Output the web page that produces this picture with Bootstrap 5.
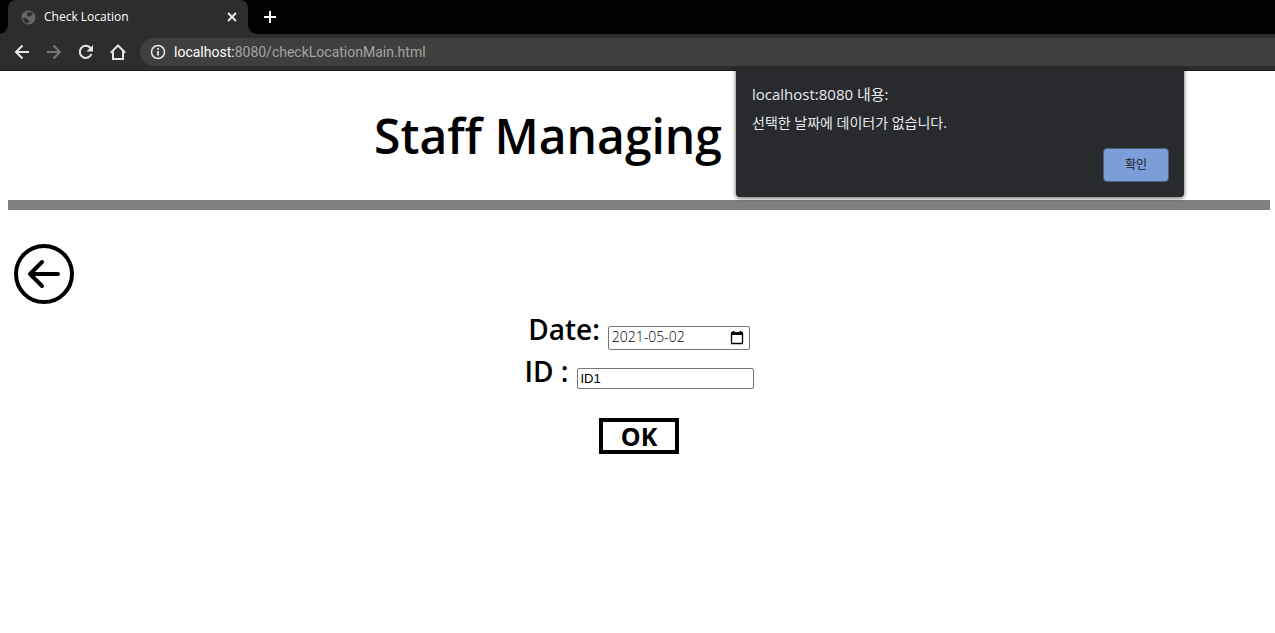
<!DOCTYPE html>
<html lang="ko">
<head>
<meta charset="utf-8">
<meta name="viewport" content="width=device-width, initial-scale=1">
<title>Check Location</title>
<link href="https://cdn.jsdelivr.net/npm/bootstrap@5.3.0/dist/css/bootstrap.min.css" rel="stylesheet">
<style>
  body { font-family: "Open Sans", "Noto Sans CJK KR", sans-serif; color: #000; background: #fff; }
  svg { display: block; flex: none; }
  button { font-family: inherit; }
  .tab-strip { height: 34px; background: #000; padding-left: 8px; }
  .page-tab { position: relative; width: 240px; background: #2d2d2d; border-radius: 8px 8px 0 0; padding: 0 10px 0 13px; gap: 8px; color: #fff; font-size: 12px; }
  .page-tab::before, .page-tab::after { content: ""; position: absolute; bottom: 0; width: 8px; height: 8px; }
  .page-tab::before { left: -8px; background: radial-gradient(circle at 0 0, #000 7px, #2d2d2d 8px); }
  .page-tab::after { right: -8px; background: radial-gradient(circle at 100% 0, #000 7px, #2d2d2d 8px); }
  .bare { border: 0; padding: 0; background: none; display: block; }
  .tool-row { height: 37px; background: #2d2d2d; border-bottom: 1px solid #1c1718; padding-left: 14px; gap: 16px; }
  .address { height: 28px; margin-left: -2px; padding-left: 10px; gap: 8px; background: #3f3f3f; border-radius: 14px 0 0 14px; font-family: Roboto, sans-serif; font-size: 14px; color: #a3a3a3; }
  .address b { font-weight: 400; color: #fff; }
  .alert-box { position: absolute; top: 67px; right: 91px; width: 448px; height: 130px; padding: 15px 15px 15px 16px; background: #292a2d; color: #e8eaed; border-radius: 4px; box-shadow: 0 1px 4px rgba(0,0,0,.65); }
  .alert-heading-text { font-size: 15px; line-height: 24px; margin: 0; font-weight: 400; }
  .alert-message { font-size: 14px; line-height: 20px; margin: 7px 0 0; }
  .confirm { width: 66px; height: 34px; padding: 0; border: 1px solid #475d83; border-radius: 4px; background: #7b9ed9; color: #202124; font-size: 12px; }
  .content { padding: 0 5px 0 8px; }
  .site-title { font-size: 48px; line-height: 65px; font-weight: 600; padding: 32px 182px 32px 0; margin: 0; }
  .rule { height: 10px; background: #808080; }
  .back { margin: 34px 0 0 6px; width: 60px; height: 60px; }
  .line-field { height: 42px; gap: 8px; }
  .line-field label { font-size: 28px; line-height: 42px; font-weight: 600; }
  .field { border: 1px solid #767676; border-radius: 2px; background: #fff; color: #000; padding: 0 3px; font-size: 13px; outline: 0; }
  .date-wrap { position: relative; margin-top: 18px; }
  .date-input { display: block; width: 142px; height: 24px; padding-bottom: 4px; font-family: "Open Sans", sans-serif; font-size: 14px; font-weight: 300; }
  .date-wrap button { position: absolute; right: 6px; top: 4px; }
  .id-input { width: 177px; height: 21px; margin-top: 18px; font-family: "Liberation Sans", sans-serif; }
  .ok { display: block; width: 80px; height: 36px; margin: 26px auto 0; border: 4px solid #000; background: #fff; color: #000; padding: 0; font-size: 25px; line-height: 28px; font-weight: 700; }
</style>
</head>
<body>
<header>
  <div class="tab-strip d-flex">
    <div class="page-tab d-flex align-items-center">
      <svg width="15" height="15" viewBox="0 0 15 15"><circle cx="7.500" cy="7.500" r="7" fill="#63676c"/><path d="M2 8c2-.5 3.500 0 4.500 1.500.5 1 2 .5 2 1.500s-1.500 1-2 2.300C4 13 2 11 2 8zM7 2.500c2-1 4 0 5 1.500-1 .5-1 1.500-2.200 1.700C8.500 6 8.800 7 7.500 6.500 6 6 5 5 7 2.500z" fill="#2d2d2d"/></svg>
      <span class="flex-grow-1">Check Location</span>
      <button class="bare" aria-label="Close tab"><svg width="12" height="12" viewBox="0 0 12 12"><path d="M2 2l8 8M10 2l-8 8" stroke="#f1f1f1" stroke-width="1.800"/></svg></button>
    </div>
    <button class="bare ms-3" aria-label="New tab"><svg width="12" height="12" viewBox="0 0 12 12"><path d="M0 6h12M6 0v12" stroke="#fff" stroke-width="2"/></svg></button>
  </div>
  <div class="tool-row d-flex align-items-center">
    <button class="bare" aria-label="Back"><svg width="16" height="16" viewBox="0 0 16 16" fill="none" stroke="#e5e5e5" stroke-width="2"><path d="M15 8H2M8.500 1.500L2 8l6.500 6.500"/></svg></button>
    <button class="bare" aria-label="Forward"><svg width="16" height="16" viewBox="0 0 16 16" fill="none" stroke="#757575" stroke-width="2"><path d="M1 8h13M7.500 1.500L14 8l-6.500 6.500"/></svg></button>
    <button class="bare" aria-label="Reload"><svg width="16" height="16" viewBox="0 0 16 16"><path d="M13.400 10A6 6 0 1 1 12.200 3.800L14 5.600" fill="none" stroke="#e5e5e5" stroke-width="2"/><path d="M15 1v6.500H8.500z" fill="#e5e5e5"/></svg></button>
    <button class="bare" aria-label="Home"><svg width="16" height="16" viewBox="0 0 16 16" fill="none" stroke="#e5e5e5" stroke-width="2"><path d="M.8 8.800L8 1.500l7.200 7.300M3 7.500V15h10V7.500"/></svg></button>
    <div class="address d-flex align-items-center flex-grow-1">
      <svg width="16" height="16" viewBox="0 0 16 16"><circle cx="8" cy="8" r="6.500" fill="none" stroke="#e8e8e8" stroke-width="1.500"/><path d="M8 7v4.500M8 4v1.800" stroke="#e8e8e8" stroke-width="1.800"/></svg>
      <span><b>localhost:</b>8080/checkLocationMain.html</span>
    </div>
  </div>
</header>

<main class="content">
  <h1 class="site-title text-center">Staff Managing</h1>
  <div class="rule"></div>
  <button class="bare back" aria-label="Go back"><svg width="60" height="60" viewBox="0 0 60 60" fill="none" stroke="#000" stroke-width="4" stroke-linecap="round" stroke-linejoin="round"><circle cx="30" cy="30" r="28"/><path d="M44 30H16M28 18L16 30l12 12"/></svg></button>
  <form class="mt-1" onsubmit="return false">
    <div class="line-field d-flex justify-content-center">
      <label for="date">Date:</label>
      <div class="date-wrap">
        <input class="field date-input" id="date" type="text" value="2021-05-02">
        <button type="button" class="bare" aria-label="Open calendar"><svg width="14" height="15" viewBox="0 0 14 15"><path d="M1.500 3h11v10.500h-11z" fill="none" stroke="#000" stroke-width="1.300"/><path d="M1 2.500h12V5H1zM2.500 1h2v2h-2zM9.500 1h2v2h-2z"/></svg></button>
      </div>
    </div>
    <div class="line-field d-flex justify-content-center">
      <label for="staff-id">ID :</label>
      <input class="field id-input" id="staff-id" type="text" value="ID1">
    </div>
    <button class="ok" type="submit">OK</button>
  </form>
</main>

<div class="alert-box d-flex flex-column" role="alertdialog" aria-labelledby="dlg-title">
  <h2 class="alert-heading-text" id="dlg-title">localhost:8080 내용:</h2>
  <p class="alert-message">선택한 날짜에 데이터가 없습니다.</p>
  <button class="confirm align-self-end mt-auto">확인</button>
</div>
<script src="https://cdn.jsdelivr.net/npm/bootstrap@5.3.0/dist/js/bootstrap.bundle.min.js"></script>
</body>
</html>
